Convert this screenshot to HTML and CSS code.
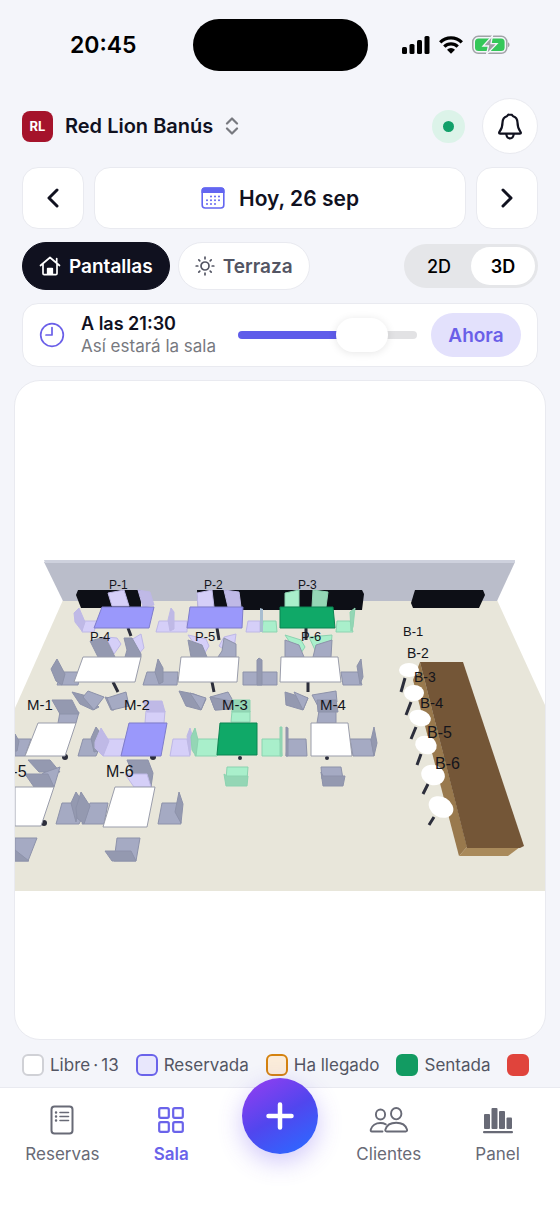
FILE: index.html
```html
<!DOCTYPE html>
<html lang="es">
<head>
    <meta charset="UTF-8">
    <meta name="viewport" content="width=device-width, initial-scale=1.0">
    <title>Sala - Red Lion Banús</title>
    <link rel="stylesheet" href="styles.css">
</head>
<body>
    <div class="status-bar">
        <span class="clock">20:45</span>
        <span class="island"></span>
        <div class="status-icons">
            <svg width="28" height="18" viewBox="0 0 28 18">
                <rect x="0" y="11" width="5" height="7" rx="1.5"/>
                <rect x="7.5" y="8" width="5" height="10" rx="1.5"/>
                <rect x="15" y="4" width="5" height="14" rx="1.5"/>
                <rect x="22.5" y="0" width="5" height="18" rx="1.5"/>
            </svg>
            <svg width="24" height="18" viewBox="0 0 24 18">
                <g fill="none" stroke="#000" stroke-width="3.3">
                    <path d="M1.2 6.3a15.3 15.3 0 0 1 21.6 0"/>
                    <path d="M5.3 10.6a9.5 9.5 0 0 1 13.4 0"/>
                </g>
                <path d="M12 17.700l-4-4a5.6 5.6 0 0 1 8 0z"/>
            </svg>
            <svg width="38" height="20" viewBox="0 0 38 20">
                <rect x=".8" y="1.3" width="34" height="17" rx="5.5" fill="none" stroke="#a0a3a6" stroke-width="1.5"/>
                <rect x="3" y="3.5" width="29.6" height="12.6" rx="3.5" fill="#34c759"/>
                <path d="M36 7.3c2 .8 2 4.2 0 5z" fill="#a0a3a6"/>
                <path d="M20.5.6 11 11h5.500L14.500 19.400 25 8.600h-6z" fill="#9b9ea2" stroke="#f4f5fa" stroke-width="1.300"/>
            </svg>
        </div>
    </div>

    <main>
        <header class="top">
            <button class="venue">
                <span class="logo">RL</span>
                <span>Red Lion Banús</span>
                <svg width="14" height="18" viewBox="0 0 14 18" fill="none" stroke="#77797f" stroke-width="2.2" stroke-linecap="round" stroke-linejoin="round">
                    <path d="M2 6.5l5-5 5 5M2 11.5l5 5 5-5"/>
                </svg>
            </button>
            <span class="online"></span>
            <button class="bell" aria-label="Notificaciones">
                <svg width="26" height="28" viewBox="0 0 26 28" fill="none" stroke="#10111f" stroke-width="2.2" stroke-linecap="round" stroke-linejoin="round">
                    <path d="M13 2.3c-1.7 0-2.5.9-3.1 1.9C7 5 5.6 7.2 5.5 10.6 5.4 15.5 4.6 17 2.8 19.3c-1 1.3-1 2.4.3 2.4h19.8c1.3 0 1.3-1.1.3-2.4-1.8-2.3-2.6-3.8-2.7-8.7-.1-3.4-1.5-5.6-4.4-6.4-.6-1-1.4-1.9-3.1-1.9z"/>
                    <path d="M9.3 22c.2 2.800 1.600 4.400 3.700 4.400s3.500-1.600 3.700-4.400"/>
                </svg>
            </button>
        </header>

        <div class="date-row">
            <button class="box arrow" aria-label="Día anterior">
                <svg width="12" height="20" viewBox="0 0 12 20"><path d="M10 2L2 10l8 8"/></svg>
            </button>
            <button class="box date">
                <svg width="24" height="22" viewBox="0 0 24 22">
                    <rect x="1.2" y="1" width="21.6" height="20" rx="3" fill="#fff" stroke="#6366f1" stroke-width="1.6"/>
                    <path d="M.5 6V3.500a3 3 0 0 1 3-3h17a3 3 0 0 1 3 3V6z" fill="#6366f1"/>
                    <g stroke="#6366f1" stroke-width="2" stroke-linecap="round" stroke-dasharray="0 4">
                        <path d="M10 9.500h9"/><path d="M6 13.300h13"/><path d="M6 17h9"/>
                    </g>
                </svg>
                <span>Hoy, 26 sep</span>
            </button>
            <button class="box arrow" aria-label="Día siguiente">
                <svg width="12" height="20" viewBox="0 0 12 20"><path d="M2 2l8 8-8 8"/></svg>
            </button>
        </div>

        <div class="zones">
            <button class="chip active">
                <svg width="22" height="20" viewBox="0 0 22 20" fill="none" stroke="#fff" stroke-width="1.7" stroke-linecap="round" stroke-linejoin="round">
                    <path d="M1.5 9.5L11 1.5l9.500 8M4 8v9.500c0 .8.400 1.200 1.200 1.200h11.600c.8 0 1.200-.4 1.200-1.200V8M17.700 6.500v-4"/>
                    <path d="M8.7 18v-5.500h4.600V18z" fill="#fff"/>
                </svg>
                <span>Pantallas</span>
            </button>
            <button class="chip">
                <svg width="20" height="20" viewBox="0 0 20 20" fill="none" stroke="#535563" stroke-width="1.7" stroke-linecap="round">
                    <circle cx="10" cy="10" r="4"/>
                    <path d="M10 1.200v1.600M10 17.200v1.600M1.200 10h1.600M17.200 10h1.600M3.800 3.800l1 1M15.200 15.200l1 1M3.800 16.200l1-1M15.200 4.800l1-1"/>
                </svg>
                <span>Terraza</span>
            </button>
            <div class="switch">
                <button>2D</button>
                <button class="on">3D</button>
            </div>
        </div>

        <div class="box time-card">
            <svg width="26" height="26" viewBox="0 0 26 26" fill="none" stroke="#6a5fe8" stroke-width="1.7" stroke-linecap="round" stroke-linejoin="round">
                <circle cx="13" cy="13" r="11.3"/><path d="M13 5.500V13H7"/>
            </svg>
            <label class="time-text" for="hour">
                <strong>A las 21:30</strong>
                <span>Así estará la sala</span>
            </label>
            <input type="range" id="hour" min="0" max="100" value="77">
            <button class="now">Ahora</button>
        </div>

        <section class="room">
            <svg class="scene" viewBox="15 381 530 658">
                <!-- suelo y pared -->
                <path class="floor" d="M63 600H497L545 705V891H15V708z"/>
                <path class="wall" d="M44 562H515L497 601H63z"/>
                <path fill="#ced1dd" d="M44 560H515V563H45z"/>
                <!-- pantallas -->
                <g fill="#0d0f16">
                    <path d="M78 590H141V608H81L76 595z"/>
                    <path d="M197 590H362L364 594 362 610H198z"/>
                    <path d="M415 590H483L485 595 479 608H413L411 603z"/>
                </g>
                <!-- sillas, fila P superior -->
                <g class="c-res">
                    <path d="M108 593L124 590 129 606H112z"/>
                    <path class="dark" d="M138 590L150 592 154 605 143 607z"/>
                    <path d="M82 621H97L94 632H82z"/>
                    <path class="dark" d="M74 613L79 608 85 622 82 631 75 622z"/>
                    <path d="M159 621H187V632H156z"/>
                    <path class="dark" d="M168 620L171 608 174 612V629L170 631z"/>
                    <path d="M197 593L212 590 214 607H198z"/>
                    <path class="dark" d="M224 590L239 592 241 607H228z"/>
                    <path d="M248 621H260V632H246z"/>
                </g>
                <g class="c-sit">
                    <path d="M285 593L299 590V607H285z"/>
                    <path class="dark" d="M313 590L328 592 326 607H312z"/>
                    <path d="M263 621H276L277 632H262z"/>
                    <path d="M337 621H350L353 632H336z"/>
                    <path class="dark" d="M350 612L355 608 353 627 351 631z"/>
                </g>
                <path fill="#a8bdd0" d="M260 608L263 609V632H260z"/>
                <path class="leg" d="M128 628l3 8M217 628l2 12M306 628v12M113 682l5 10M212 682l2 10M308 682v10"/>
                <path class="t-res" d="M102 607H154L149 628H94z"/>
                <path class="t-res" d="M190 607H243L242 628H187z"/>
                <path class="t-sit" d="M280 607H333L335 628H280z"/>

                <!-- fila P inferior -->
                <g class="c-res">
                    <path d="M106 637L117 638 121 644 114 654z"/>
                    <path d="M131 640L141 634 144 648 137 656z"/>
                    <path d="M188 635L206 639 209 646 203 656z"/>
                    <path d="M219 646L224 637 236 634 233 656z"/>
                </g>
                <g class="c-sit">
                    <path d="M285 635L301 640 305 647 299 656z"/>
                    <path d="M309 637L315 650 331 647 332 635z"/>
                </g>
                <g class="c-free">
                    <path class="dark" d="M90 641L105 637 115 657H98z"/>
                    <path class="dark" d="M124 638L132 638 141 654V657H125L127 650z"/>
                    <path class="dark" d="M188 640L202 645 207 657H191z"/>
                    <path d="M224 638L236 644V657H218L222 651z"/>
                    <path d="M285 640L299 645 304 657H285z"/>
                    <path d="M316 645L332 640 331 657H313z"/>
                    <path d="M62 672H81L78 685H57z"/>
                    <path class="dark" d="M51 669L57 659 65 674 62 685 56 681z"/>
                    <path d="M147 672H178L177 685H143z"/>
                    <path class="dark" d="M155 672L158 659 163 668V682L159 684z"/>
                    <path d="M243 672H277V685H243z"/>
                    <path class="dark" d="M257 660L259 658 262 660V685H257z"/>
                    <path d="M341 672H358L362 685H343z"/>
                    <path class="dark" d="M357 666L361 659 363 677 360 684z"/>
                    <path class="dark" d="M72 692L87 696 99 707 93 710 80 704z"/>
                    <path d="M88 691L104 697 94 710 83 697z"/>
                    <path class="dark" d="M105 697L109 698 114 710 111 710z"/>
                    <path d="M107 698L126 692 129 706 112 710z"/>
                    <path class="dark" d="M179 691L194 694 206 699 201 710 186 706z"/>
                    <path d="M190 693L206 698 201 710z"/>
                    <path d="M210 697L228 692 232 699 231 709 215 710z"/>
                    <path class="dark" d="M210 697L231 701V709L215 710z"/>
                    <path class="dark" d="M285 692L298 696 308 698 303 710 286 705z"/>
                    <path d="M294 692L308 698 303 710z"/>
                    <path d="M312 695L336 691 337 702 320 710z"/>
                </g>
                <path class="t-free" d="M83 657H141L135 682H74z"/>
                <path class="t-free" d="M181 657H239L237 682H178z"/>
                <path class="t-free" d="M281 657H338L341 682H280z"/>

                <!-- fila M superior -->
                <g class="c-free">
                    <path d="M60 712H79L76 723H58z"/>
                    <path class="dark" d="M52 700H72L79 714H60z"/>
                    <path d="M15 739H31L25 756H15z"/>
                    <path class="dark" d="M15 734L19 741 17 751H15z"/>
                    <path d="M83 739H94L99 749 96 756H78z"/>
                    <path class="dark" d="M91 738L96 727 99 731 98 751 94 752z"/>
                    <path d="M319 711H336V723H317z"/>
                    <path class="dark" d="M317 700H336L338 712H318z"/>
                    <path d="M288 739H306L307 756H286z"/>
                    <path class="dark" d="M286 727L288 728V756H286z"/>
                    <path d="M350 739H371L374 756H353z"/>
                    <path class="dark" d="M371 740L374 727 377 743 374 756z"/>
                    <path d="M321 767H341L343 779H322z"/>
                    <path class="dark" d="M321 772L323 776H345L343 786H323z"/>
                </g>
                <g class="c-res">
                    <path d="M146 711H165L164 723H145z"/>
                    <path class="dark" d="M143 701H162L165 712H147z"/>
                    <path d="M107 739H125L121 756H103z"/>
                    <path class="dark" d="M95 742L101 728 109 741 103 756 95 748z"/>
                    <path d="M173 739H187L190 756H170z"/>
                    <path class="dark" d="M187 736L190 728 192 735 190 755z"/>
                </g>
                <g class="c-sit">
                    <path d="M232 711H250V722H231z"/>
                    <path class="dark" d="M232 700H250V712H232z"/>
                    <path d="M197 739H218L217 756H195z"/>
                    <path class="dark" d="M191 737L195 728 198 740 196 756 192 750z"/>
                    <path d="M262 739H280L282 756H262z"/>
                    <path class="dark" d="M280 727H282V756H280z"/>
                    <path d="M227 767H248L247 780H226z"/>
                    <path class="dark" d="M224 774L227 776H248L247 786H226z"/>
                </g>
                <g fill="#2c2e3b">
                    <circle cx="65" cy="757" r="3"/><circle cx="153" cy="757" r="3"/>
                    <circle cx="240" cy="758" r="2"/><circle cx="327" cy="758" r="2"/><circle cx="44" cy="823" r="3"/>
                </g>
                <path class="t-free" d="M38 723H76L65 756H25z"/>
                <path class="t-res" d="M129 723H167L161 756H121z"/>
                <path class="t-sit" d="M220 723H257V755H217z"/>
                <path class="t-free" d="M311 723H348L352 756H311z"/>

                <!-- fila M inferior -->
                <g class="c-free">
                    <path class="dark" d="M28 760H50L60 772H39z"/>
                    <path d="M43 773L60 767 54 787H34z"/>
                    <path class="dark" d="M25 774H48L54 787H34z"/>
                    <path d="M62 803H75L81 820 79 824H56z"/>
                    <path class="dark" d="M71 803L76 792 80 798 76 822z"/>
                    <path d="M90 803H108L104 824H82z"/>
                    <path class="dark" d="M76 808L81 792 90 806 84 824 77 818z"/>
                    <path d="M162 803H178L181 824H158z"/>
                    <path class="dark" d="M175 812L179 792 183 804 181 823z"/>
                    <path d="M15 838H37L28 861H15z"/>
                    <path class="dark" d="M15 850L29 861H15z"/>
                    <path d="M117 838H140L136 861H114z"/>
                    <path class="dark" d="M105 851H131L136 861H112z"/>
                    <path class="dark" d="M127 760H148L153 773 151 787 147 774H133z"/>
                </g>
                <path class="c-res" d="M125 774H147L151 787H134z"/>
                <path class="t-free" d="M15 787H54L41 826H15z"/>
                <path class="t-free" d="M115 787H155L147 827H103z"/>

                <!-- barra -->
                <path fill="#99794d" d="M420 662L467 847 459 856 413 680z"/>
                <path fill="#a98a5b" d="M467 847H520L508 856H459z"/>
                <path fill="#745637" d="M420 662H463L524 846 520 848H467z"/>
                <path class="leg" d="M405 678l-4 14M411 702l-5 13M416 727l-5 12M421 754l-4 11M428 784l-5 10M434 817l-5 8"/>
                <g class="stools">
                    <ellipse cx="409" cy="670" rx="10" ry="7"/>
                    <ellipse cx="414" cy="693" rx="10" ry="8"/>
                    <ellipse cx="420" cy="718" rx="11" ry="8" transform="rotate(15 420 718)"/>
                    <ellipse cx="426" cy="745" rx="11" ry="9" transform="rotate(20 426 745)"/>
                    <ellipse cx="433" cy="775" rx="12" ry="10" transform="rotate(20 433 775)"/>
                    <ellipse cx="441" cy="807" rx="13" ry="10" transform="rotate(30 441 807)"/>
                </g>

                <g class="labels">
                    <g font-size="12">
                        <text x="109" y="589">P-1</text>
                        <text x="204" y="589">P-2</text>
                        <text x="298" y="589">P-3</text>
                    </g>
                    <g font-size="13">
                        <text x="90" y="641">P-4</text>
                        <text x="195" y="641">P-5</text>
                        <text x="301" y="641">P-6</text>
                        <text x="403" y="636">B-1</text>
                    </g>
                    <g font-size="14">
                        <text x="407" y="658">B-2</text>
                        <text x="414" y="682">B-3</text>
                    </g>
                    <g font-size="15">
                        <text x="27" y="710">M-1</text>
                        <text x="124" y="710">M-2</text>
                        <text x="222" y="710">M-3</text>
                        <text x="320" y="710">M-4</text>
                        <text x="420" y="708">B-4</text>
                    </g>
                    <g font-size="16">
                        <text x="-1" y="777">M-5</text>
                        <text x="106" y="777">M-6</text>
                        <text x="427" y="738">B-5</text>
                        <text x="435" y="769">B-6</text>
                    </g>
                </g>
            </svg>
        </section>

        <div class="legend">
            <span class="key"><i class="swatch free"></i>Libre&thinsp;·&thinsp;13</span>
            <span class="key"><i class="swatch reserved"></i>Reservada</span>
            <span class="key"><i class="swatch arrived"></i>Ha llegado</span>
            <span class="key"><i class="swatch seated"></i>Sentada</span>
            <span class="key"><i class="swatch late"></i></span>
        </div>
    </main>

    <nav class="tabs">
        <a href="#reservas">
            <svg width="24" height="30" viewBox="0 0 24 30" fill="none" stroke="#686a76" stroke-width="2" stroke-linecap="round">
                <rect x="1.5" y="1.5" width="21" height="27" rx="3"/>
                <path d="M10 7.500h8.500M10 11.500h8.500M10 15.500h8.500" stroke-width="1.6"/>
                <path d="M6 7.500h.1M6 11.500h.1M6 15.500h.1" stroke-width="2.4"/>
            </svg>
            <span>Reservas</span>
        </a>
        <a href="#sala" class="current">
            <svg width="26" height="30" viewBox="0 0 26 30" fill="none" stroke="#6a63ea" stroke-width="2.2">
                <rect x="1.2" y="3.2" width="9.6" height="9.6" rx="1.5"/>
                <rect x="15.2" y="3.2" width="9.6" height="9.6" rx="1.5"/>
                <rect x="1.2" y="17.2" width="9.6" height="9.6" rx="1.5"/>
                <rect x="15.2" y="17.2" width="9.6" height="9.6" rx="1.5"/>
            </svg>
            <span>Sala</span>
        </a>
        <button class="add" aria-label="Nueva reserva">
            <svg width="28" height="28" viewBox="0 0 28 28" stroke="#fff" stroke-width="4.5" stroke-linecap="round"><path d="M14 2.500v23M2.500 14h23"/></svg>
        </button>
        <a href="#clientes">
            <svg width="40" height="30" viewBox="0 0 40 30" fill="none" stroke="#686a76" stroke-width="1.9" stroke-linecap="round" stroke-linejoin="round">
                <ellipse cx="11.5" cy="9.5" rx="4.6" ry="5"/>
                <ellipse cx="27.2" cy="8.7" rx="5.2" ry="5.7"/>
                <path d="M13.5 26.500H3c-1.200 0-1.500-.8-1.200-2 1-3.800 5-6.500 9.700-6.500 2 0 3.800.5 5.300 1.300"/>
                <path d="M17.7 26.500h19c1.300 0 1.600-.9 1.300-2-1.200-4-5.400-6.700-10.800-6.700s-9.600 2.700-10.800 6.700c-.3 1.100 0 2 1.300 2z"/>
            </svg>
            <span>Clientes</span>
        </a>
        <a href="#panel">
            <svg width="30" height="30" viewBox="0 0 30 30" fill="#686a76">
                <rect x="1" y="9" width="6" height="15" rx="1"/>
                <rect x="8.5" y="3" width="6" height="21" rx="1"/>
                <rect x="16" y="6" width="6" height="18" rx="1"/>
                <rect x="23.5" y="12.5" width="5.5" height="11.5" rx="1"/>
                <rect x="0" y="26" width="30" height="2.2" rx="1"/>
            </svg>
            <span>Panel</span>
        </a>
    </nav>
</body>
</html>
```
FILE: styles.css
```css
* {
    box-sizing: border-box;
}
body {
    margin: 0;
    min-height: 100vh;
    display: flex;
    flex-direction: column;
    background-color: #f4f5fa;
    color: #10111f;
    font-family: Inter, "Liberation Sans", sans-serif;
    overflow-x: hidden;
}
button {
    border: none;
    padding: 0;
    background: none;
    color: inherit;
    font-family: inherit;
    cursor: pointer;
}
svg {
    display: block;
    flex-shrink: 0;
}
.status-bar {
    display: grid;
    grid-template-columns: 1fr 175px 1fr;
    align-items: center;
    height: 90px;
}
.clock {
    padding-left: 14px;
    color: #000;
    font-size: 23px;
    font-weight: 600;
    text-align: center;
}
.island {
    height: 52px;
    border-radius: 26px;
    background-color: #000;
}
.status-icons {
    display: flex;
    align-items: center;
    gap: 9px;
    padding-left: 34px;
}
main {
    flex: 1;
    display: flex;
    flex-direction: column;
    gap: 13px;
    padding: 8px 14px 0;
}
.top, .date-row, .zones, .time-card {
    margin: 0 8px;
}
.top {
    display: flex;
    align-items: center;
    gap: 17px;
}
.venue {
    display: flex;
    align-items: center;
    gap: 12px;
    margin-right: auto;
    font-size: 20px;
    font-weight: 600;
}
.logo {
    width: 31px;
    height: 31px;
    border-radius: 8px;
    background-color: #a5132b;
    color: #fff;
    font-size: 13px;
    font-weight: 700;
    line-height: 31px;
}
.online {
    width: 33px;
    height: 33px;
    border: 11px solid #dcf3e9;
    border-radius: 50%;
    background-color: #12a06a;
}
.bell {
    display: grid;
    place-items: center;
    width: 56px;
    height: 56px;
    border: 1px solid #e9eaf0;
    border-radius: 50%;
    background-color: #fff;
}
.box {
    border: 1px solid #e9eaf0;
    border-radius: 16px;
    background-color: #fff;
}
.date-row {
    display: flex;
    gap: 10px;
    height: 62px;
}
.arrow {
    display: grid;
    place-items: center;
    width: 62px;
}
.arrow path {
    fill: none;
    stroke: #10111f;
    stroke-width: 3;
    stroke-linecap: round;
    stroke-linejoin: round;
}
.date {
    flex: 1;
    display: flex;
    align-items: center;
    justify-content: center;
    gap: 14px;
    font-size: 21px;
    font-weight: 600;
}
.zones {
    display: flex;
    align-items: center;
    gap: 8px;
}
.chip {
    display: flex;
    align-items: center;
    gap: 8px;
    height: 48px;
    padding: 0 16px;
    border: 1px solid #e9eaf0;
    border-radius: 24px;
    background-color: #fff;
    color: #535563;
    font-size: 19px;
    font-weight: 600;
}
.chip.active {
    border-color: #10111f;
    background-color: #10111f;
    color: #fff;
}
.switch {
    display: flex;
    height: 44px;
    margin-left: auto;
    padding: 3px;
    border-radius: 22px;
    background-color: #e5e6e9;
}
.switch button {
    width: 64px;
    border-radius: 19px;
    color: #000;
    font-size: 18px;
    font-weight: 500;
}
.switch .on {
    background-color: #fff;
    font-weight: 600;
}
.time-card {
    display: flex;
    align-items: center;
    height: 64px;
    padding: 0 16px;
}
.time-text {
    display: flex;
    flex-direction: column;
    margin: 0 22px 0 16px;
    color: #77797f;
    font-size: 17px;
    line-height: 23px;
    white-space: nowrap;
}
.time-text strong {
    color: #10111f;
    font-size: 18px;
    font-weight: 600;
}
input[type="range"] {
    flex: 1;
    min-width: 0;
    height: 36px;
    margin: 0 14px 0 0;
    appearance: none;
    background: none;
}
input[type="range"]::-webkit-slider-runnable-track {
    height: 8px;
    border-radius: 4px;
    background: linear-gradient(to right, #5f5cea 70%, #e2e2e4 70%);
}
input[type="range"]::-webkit-slider-thumb {
    appearance: none;
    width: 52px;
    height: 34px;
    margin-top: -13px;
    border-radius: 17px;
    background-color: #fff;
    box-shadow: 0 1px 8px rgba(0, 0, 0, 0.1);
}
.now {
    width: 90px;
    height: 44px;
    border-radius: 22px;
    background-color: #e3e1fc;
    color: #6a5fe8;
    font-size: 19px;
    font-weight: 600;
}
.room {
    border: 1px solid #e9eaf0;
    border-radius: 26px;
    background-color: #fff;
    overflow: hidden;
}
.scene {
    width: 100%;
    height: auto;
}
.floor { fill: #e8e6da; }
.wall { fill: #babdca; }
.leg {
    fill: none;
    stroke: #2c2e3b;
    stroke-width: 3;
}
.t-free {
    fill: #fff;
    stroke: #9a9dab;
    stroke-width: 1;
}
.t-res {
    fill: #9a98fb;
    stroke: #7f7dcb;
    stroke-width: 1;
}
.t-sit {
    fill: #10a968;
    stroke: #0b8552;
    stroke-width: 1;
}
.c-free, .c-res, .c-sit {
    stroke-width: 1;
    stroke-linejoin: round;
}
.c-free {
    fill: #a5aac3;
    stroke: #8d92aa;
}
.c-free .dark { fill: #9499b0; }
.c-res {
    fill: #d5cff8;
    stroke: #beb8e6;
}
.c-res .dark { fill: #bfb9e6; }
.c-sit {
    fill: #a9efcb;
    stroke: #8cd3b0;
}
.c-sit .dark { fill: #94d6b5; }
.stools { fill: #fff; }
.labels {
    fill: #14151c;
    font-family: "Liberation Sans", Arial, sans-serif;
}
.legend {
    display: flex;
    gap: 17px;
    height: 47px;
    margin: -13px 8px 0;
    padding-top: 2px;
    overflow: hidden;
    color: #535563;
    font-size: 17px;
}
.key {
    display: flex;
    align-items: center;
    gap: 6px;
    white-space: nowrap;
}
.swatch {
    width: 22px;
    height: 22px;
    border: 2px solid;
    border-radius: 6px;
}
.free {
    border-color: #d0d1d6;
    background-color: #fff;
}
.reserved {
    border-color: #6a63ea;
    background-color: #e8e7fc;
}
.arrived {
    border-color: #d4820f;
    background-color: #fbecd9;
}
.seated {
    border-color: #129b62;
    background-color: #129b62;
}
.late {
    border-color: #e0443c;
    background-color: #e0443c;
}
.tabs {
    display: grid;
    grid-template-columns: repeat(5, 1fr);
    justify-items: center;
    align-items: start;
    height: 131px;
    padding: 0 8px;
    border-top: 1px solid #e9eaf0;
    background-color: #fff;
}
.tabs a {
    display: flex;
    flex-direction: column;
    align-items: center;
    gap: 8px;
    padding-top: 17px;
    color: #686a76;
    font-size: 17px;
    line-height: 22px;
    text-decoration: none;
}
.tabs .current {
    color: #6a63ea;
    font-weight: 600;
}
.add {
    display: grid;
    place-items: center;
    width: 76px;
    height: 76px;
    margin-top: -10px;
    border-radius: 50%;
    background: linear-gradient(150deg, #8a3ff0 10%, #5146ee 50%, #2f66ff 90%);
    box-shadow: 0 8px 24px rgba(99, 70, 240, 0.3);
}
```
